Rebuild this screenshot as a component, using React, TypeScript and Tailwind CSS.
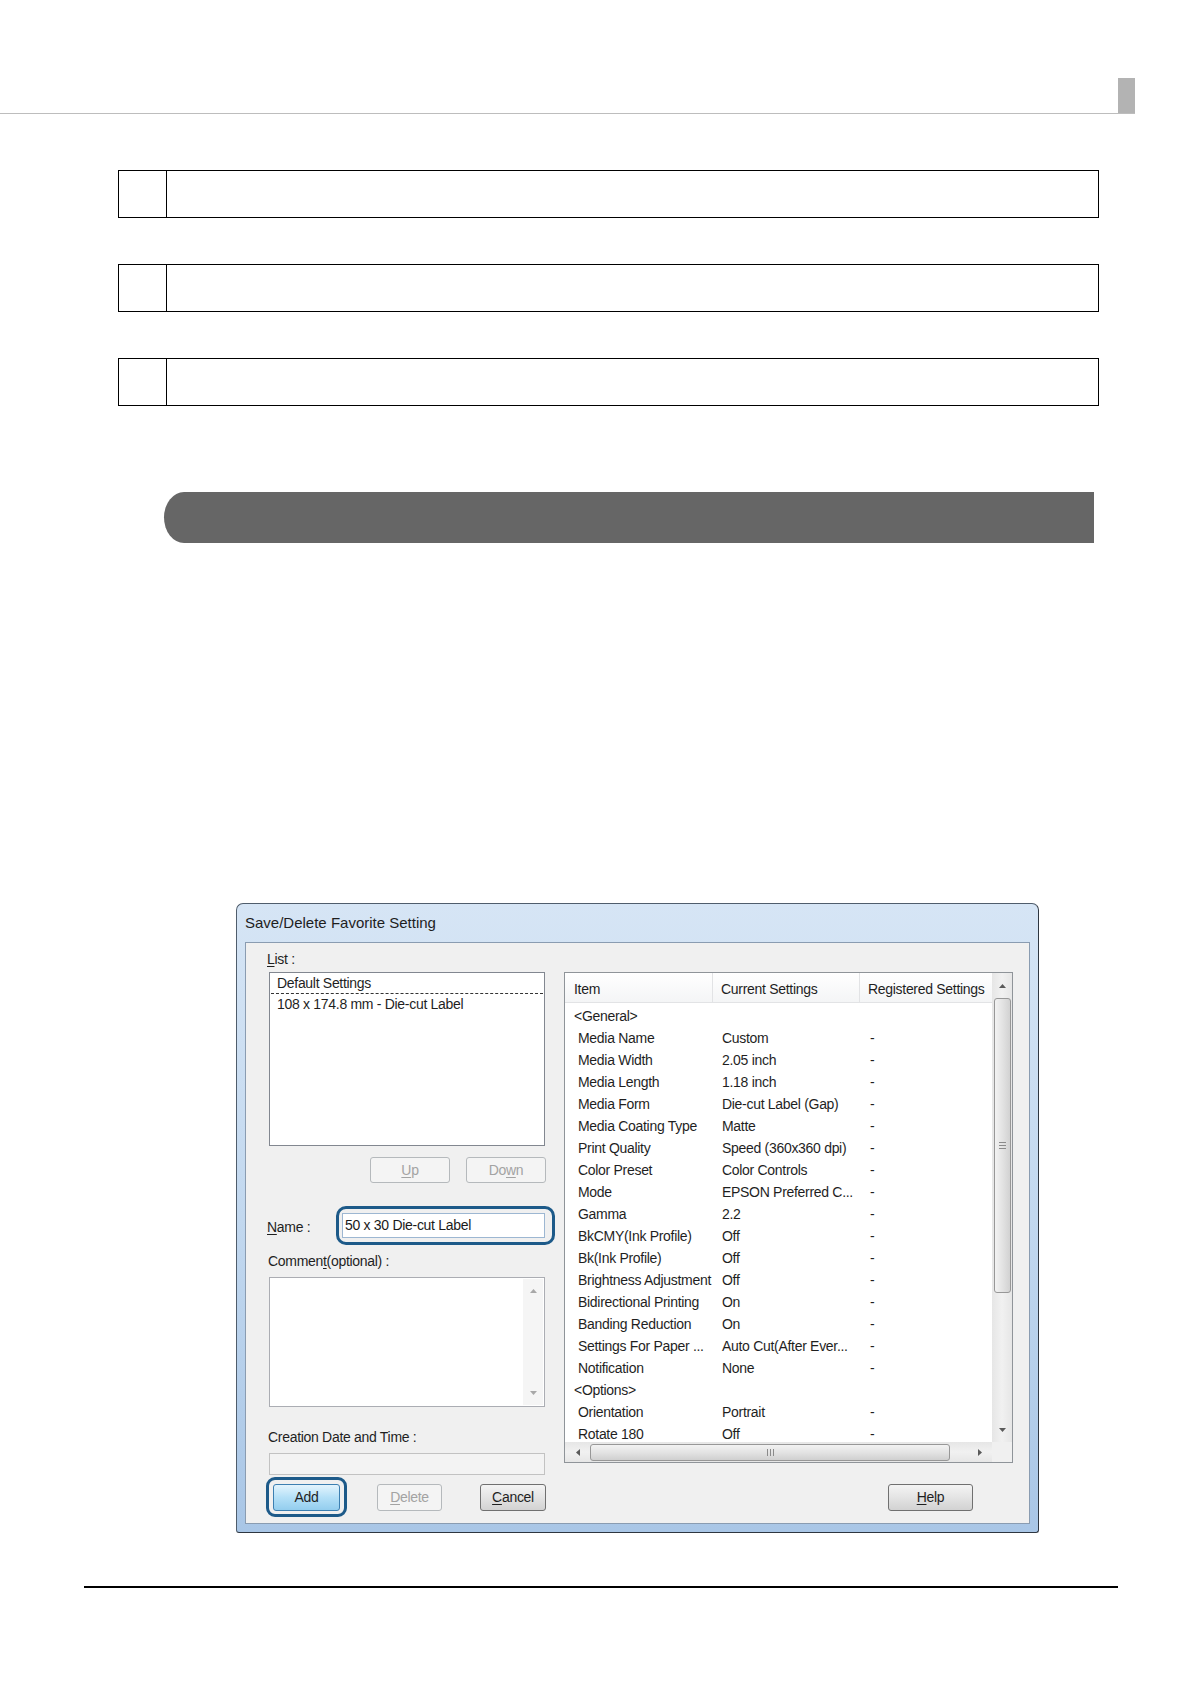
import React from "react";

const rows: Array<[string, string] | string> = [
  "<General>",
  ["Media Name", "Custom"],
  ["Media Width", "2.05 inch"],
  ["Media Length", "1.18 inch"],
  ["Media Form", "Die-cut Label (Gap)"],
  ["Media Coating Type", "Matte"],
  ["Print Quality", "Speed (360x360 dpi)"],
  ["Color Preset", "Color Controls"],
  ["Mode", "EPSON Preferred C..."],
  ["Gamma", "2.2"],
  ["BkCMY(Ink Profile)", "Off"],
  ["Bk(Ink Profile)", "Off"],
  ["Brightness Adjustment", "Off"],
  ["Bidirectional Printing", "On"],
  ["Banding Reduction", "On"],
  ["Settings For Paper ...", "Auto Cut(After Ever..."],
  ["Notification", "None"],
  "<Options>",
  ["Orientation", "Portrait"],
  ["Rotate 180", "Off"],
];

function Tri({ dir, color = "#5a5a5a" }: { dir: "up" | "down" | "left" | "right"; color?: string }) {
  const pts =
    dir === "up"
      ? "0,4 3.5,0 7,4"
      : dir === "down"
      ? "0,0 7,0 3.5,4"
      : dir === "left"
      ? "4,0 4,7 0,3.5"
      : "0,0 0,7 4,3.5";
  const w = dir === "up" || dir === "down" ? 7 : 4;
  const h = dir === "up" || dir === "down" ? 4 : 7;
  return (
    <svg width={w} height={h} viewBox={`0 0 ${w} ${h}`}>
      <polygon points={pts} fill={color} />
    </svg>
  );
}

function U({ children }: { children: React.ReactNode }) {
  return <span className="underline underline-offset-[2px] decoration-[1px]">{children}</span>;
}

function Btn({
  children,
  w,
  disabled,
  primary,
}: {
  children: React.ReactNode;
  w: string;
  disabled?: boolean;
  primary?: boolean;
}) {
  const base = "h-[27px] rounded-[3px] border flex items-center justify-center text-[14px] tracking-[-0.3px] ";
  const style = disabled
    ? "border-[#b5b9bc] bg-[#f4f4f4] text-[#a3a3a3]"
    : primary
    ? "border-[#3c7fb1] bg-gradient-to-b from-[#e3f4fd] via-[#b4e0f7] to-[#93cdee] text-[#1f1f1f]"
    : "border-[#707070] bg-gradient-to-b from-[#f4f4f4] via-[#e4e4e4] to-[#d2d2d2] text-[#1f1f1f]";
  return <div className={base + w + " " + style}>{children}</div>;
}

function Dialog() {
  return (
    <div className="ml-[236px] mt-[360px] w-[803px] h-[630px] border border-[#4f5d6c] border-r-[#2e3640] border-b-[#2e3640] rounded-t-[7px] rounded-b-[3px] bg-gradient-to-b from-[#d6e5f5] via-[#c2d8ef] to-[#a9c6e6] flex flex-col">
      {/* title bar */}
      <div className="h-[38px] pl-[8px] pt-[1px] flex items-center text-[15px] text-[#1e1e1e]">
        Save/Delete Favorite Setting
      </div>
      {/* client panel */}
      <div className="mx-[8px] h-[582px] border border-[#8a9cb1] bg-[#f0f0f0] flex flex-col pt-[8px] text-[14px] tracking-[-0.3px] text-[#1f1f1f]">
        <div className="flex items-start pl-[23px]">
          {/* left column */}
          <div className="w-[286px] flex flex-col">
            <div className="h-[17px] leading-[17px] -ml-[2px]">
              <U>L</U>ist :
            </div>
            <div className="mt-[4px] w-[276px] h-[174px] border border-[#828790] bg-white">
              <div className="mx-[1px] h-[21px] leading-[21px] pl-[6px] border-b border-dashed border-[#333]">
                Default Settings
              </div>
              <div className="h-[21px] leading-[21px] pl-[7px]">108 x 174.8 mm - Die-cut Label</div>
            </div>
            <div className="mt-[11px] w-[277px] flex justify-end gap-[16px]">
              <div className="h-[26px] w-[80px] rounded-[3px] border border-[#b5b9bc] bg-[#f4f4f4] text-[#a3a3a3] flex items-center justify-center">
                <U>U</U>p
              </div>
              <div className="h-[26px] w-[80px] rounded-[3px] border border-[#b5b9bc] bg-[#f4f4f4] text-[#a3a3a3] flex items-center justify-center">
                Do<U>w</U>n
              </div>
            </div>
            <div className="mt-[23px] h-[39px] flex items-center">
              <div className="w-[67px] -ml-[2px] pt-[3px]">
                <U>N</U>ame :
              </div>
              <div className="w-[219px] h-[39px] border-[3px] border-[#1d5a89] rounded-[10px] pl-[3px] pr-[7px] py-[4px] ml-[2px]">
                <div className="h-full border border-[#9db7d2] bg-white flex items-center pl-[2px] text-[#1a1a1a]">
                  50 x 30 Die-cut Label
                </div>
              </div>
            </div>
            <div className="mt-[8px] h-[17px] leading-[17px] -ml-[1px]">
              Commen<U>t</U>(optional) :
            </div>
            <div className="mt-[7px] w-[276px] h-[130px] border border-[#abadb3] bg-white flex justify-end p-[1px]">
              <div className="w-[20px] h-full bg-[#f5f5f5] flex flex-col items-center justify-between py-[10px]">
                <Tri dir="up" color="#a8a8a8" />
                <Tri dir="down" color="#a8a8a8" />
              </div>
            </div>
            <div className="mt-[22px] h-[17px] leading-[17px] -ml-[1px]">Creation Date and Time :</div>
            <div className="mt-[7px] w-[276px] h-[22px] border border-[#c2c2c2] bg-[#f3f3f3]" />
          </div>
          {/* right table */}
          <div className="mt-[21px] ml-[9px] w-[449px] h-[491px] border border-[#8f9499] bg-white flex flex-col">
            <div className="h-[469px] flex">
              <div className="flex-1 flex flex-col overflow-hidden">
                <div className="h-[30px] flex bg-gradient-to-b from-white to-[#f4f5f6] border-b border-[#e2e3e5] shrink-0">
                  <div className="w-[148px] pl-[9px] pt-[3px] flex items-center border-r border-[#e2e3e5]">Item</div>
                  <div className="w-[147px] pl-[8px] pt-[3px] flex items-center border-r border-[#e2e3e5]">Current Settings</div>
                  <div className="flex-1 pl-[8px] pt-[3px] flex items-center whitespace-nowrap">Registered Settings</div>
                </div>
                <div className="pt-[2px] flex flex-col">
                  {rows.map((r, i) =>
                    typeof r === "string" ? (
                      <div key={i} className="h-[22px] leading-[22px] pl-[9px] shrink-0">
                        {r}
                      </div>
                    ) : (
                      <div key={i} className="h-[22px] leading-[22px] flex shrink-0 whitespace-nowrap">
                        <div className="w-[148px] pl-[13px]">{r[0]}</div>
                        <div className="w-[147px] pl-[9px]">{r[1]}</div>
                        <div className="flex-1 pl-[10px]">-</div>
                      </div>
                    )
                  )}
                </div>
              </div>
              {/* vertical scrollbar */}
              <div className="w-[20px] h-full bg-gradient-to-r from-[#e6e6e6] via-[#f1f1f1] to-[#e6e6e6] flex flex-col items-center">
                <div className="h-[25px] flex items-center justify-center shrink-0">
                  <Tri dir="up" />
                </div>
                <div className="w-[17px] h-[295px] shrink-0 rounded-[3px] border border-[#979797] bg-gradient-to-r from-[#f2f2f2] via-[#e3e3e3] to-[#d2d2d2] flex flex-col items-center justify-center gap-[2px]">
                  <div className="w-[7px] h-[1px] bg-[#8a8a8a]" />
                  <div className="w-[7px] h-[1px] bg-[#8a8a8a]" />
                  <div className="w-[7px] h-[1px] bg-[#8a8a8a]" />
                </div>
                <div className="flex-1" />
                <div className="h-[25px] flex items-center justify-center shrink-0">
                  <Tri dir="down" />
                </div>
              </div>
            </div>
            {/* horizontal scrollbar */}
            <div className="h-[20px] flex">
              <div className="flex-1 bg-gradient-to-b from-[#e6e6e6] via-[#f1f1f1] to-[#e6e6e6] flex items-center">
                <div className="w-[25px] flex justify-center shrink-0">
                  <Tri dir="left" />
                </div>
                <div className="w-[360px] h-[17px] shrink-0 rounded-[3px] border border-[#979797] bg-gradient-to-b from-[#f2f2f2] via-[#e3e3e3] to-[#d0d0d0] flex items-center justify-center gap-[2px]">
                  <div className="w-[1px] h-[7px] bg-[#8a8a8a]" />
                  <div className="w-[1px] h-[7px] bg-[#8a8a8a]" />
                  <div className="w-[1px] h-[7px] bg-[#8a8a8a]" />
                </div>
                <div className="flex-1" />
                <div className="w-[25px] flex justify-center shrink-0">
                  <Tri dir="right" />
                </div>
              </div>
              <div className="w-[20px] bg-[#f0f0f0]" />
            </div>
          </div>
        </div>
        {/* buttons row */}
        <div className="mt-[2px] pl-[20px] h-[40px] flex items-center">
          <div className="w-[81px] h-[40px] border-[3px] border-[#1d5a89] rounded-[9px] flex items-center justify-center">
            <Btn w="w-[67px]" primary>
              Add
            </Btn>
          </div>
          <div className="ml-[30px]">
            <Btn w="w-[65px]" disabled>
              <U>D</U>elete
            </Btn>
          </div>
          <div className="ml-[38px]">
            <Btn w="w-[66px]">
              <U>C</U>ancel
            </Btn>
          </div>
          <div className="ml-[342px]">
            <Btn w="w-[85px]">
              <U>H</U>elp
            </Btn>
          </div>
        </div>
      </div>
    </div>
  );
}

export default function App() {
  return (
    <div className="w-[1190px] h-[1684px] bg-white overflow-hidden font-['Liberation_Sans',Arial,sans-serif] text-[#1f1f1f]">
      <div className="w-[1135px] h-[114px] border-b border-[#bdbdbd] flex justify-end items-end">
        <div className="w-[17px] h-[35px] bg-[#b3b3b3]" />
      </div>
      <div className="mt-[56px] ml-[118px] flex flex-col gap-[46px]">
        {[0, 1, 2].map((i) => (
          <div key={i} className="w-[981px] h-[48px] border-[1.5px] border-black flex">
            <div className="w-[48px] h-full border-r-[1.5px] border-black" />
          </div>
        ))}
      </div>
      <div className="mt-[86px] ml-[164px] w-[930px] h-[51px] bg-[#666666] rounded-l-[20px_25.5px]" />
      <Dialog />
      <div className="mt-[53px] ml-[84px] w-[1034px] h-[2px] bg-black" />
    </div>
  );
}
